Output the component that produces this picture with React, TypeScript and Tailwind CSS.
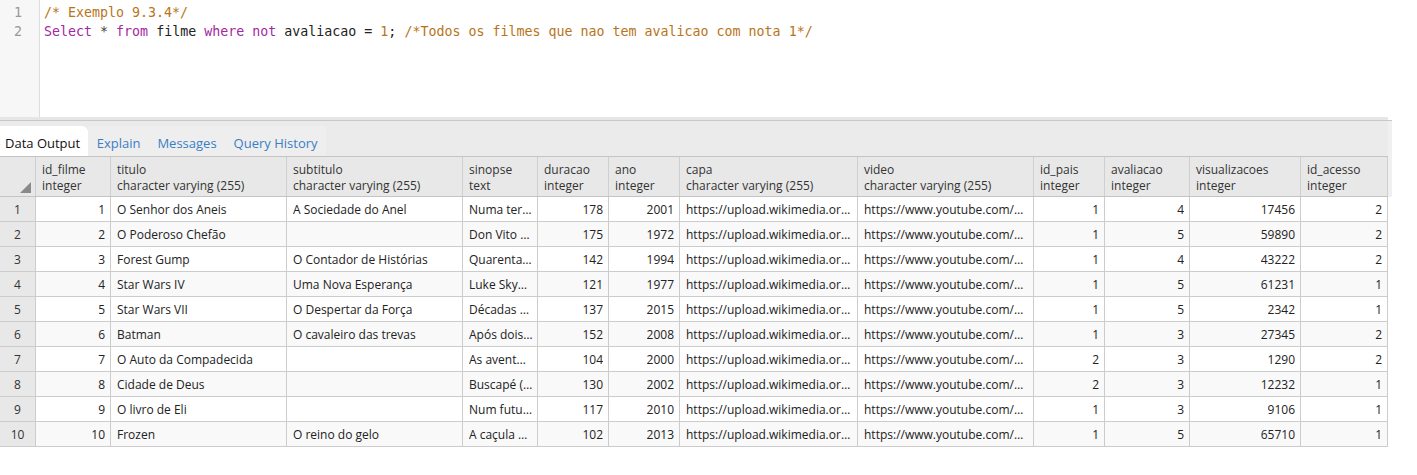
import React from 'react'

type Col = { key: string; name: string; type: string; width: number; num?: boolean }

const columns: Col[] = [
  { key: 'id_filme', name: 'id_filme', type: 'integer', width: 75, num: true },
  { key: 'titulo', name: 'titulo', type: 'character varying (255)', width: 176 },
  { key: 'subtitulo', name: 'subtitulo', type: 'character varying (255)', width: 176 },
  { key: 'sinopse', name: 'sinopse', type: 'text', width: 75 },
  { key: 'duracao', name: 'duracao', type: 'integer', width: 71, num: true },
  { key: 'ano', name: 'ano', type: 'integer', width: 71, num: true },
  { key: 'capa', name: 'capa', type: 'character varying (255)', width: 178 },
  { key: 'video', name: 'video', type: 'character varying (255)', width: 176 },
  { key: 'id_pais', name: 'id_pais', type: 'integer', width: 71, num: true },
  { key: 'avaliacao', name: 'avaliacao', type: 'integer', width: 85, num: true },
  { key: 'visualizacoes', name: 'visualizacoes', type: 'integer', width: 111, num: true },
  { key: 'id_acesso', name: 'id_acesso', type: 'integer', width: 87, num: true },
]

const capa = 'https://upload.wikimedia.org/wikipedia/pt/capa.jpg'
const video = 'https://www.youtube.com/watch?v=trailer'

const rows: Record<string, string>[] = [
  ['1', 'O Senhor dos Aneis', 'A Sociedade do Anel', 'Numa terra fantástica e única', '178', '2001', '1', '4', '17456', '2'],
  ['2', 'O Poderoso Chefão', '', 'Don Vito Corleone é o chefe', '175', '1972', '1', '5', '59890', '2'],
  ['3', 'Forest Gump', 'O Contador de Histórias', 'Quarenta anos da história', '142', '1994', '1', '4', '43222', '2'],
  ['4', 'Star Wars IV', 'Uma Nova Esperança', 'Luke Skywalker sonha', '121', '1977', '1', '5', '61231', '1'],
  ['5', 'Star Wars VII', 'O Despertar da Força', 'Décadas depois da queda', '137', '2015', '1', '5', '2342', '1'],
  ['6', 'Batman', 'O cavaleiro das trevas', 'Após dois anos desde', '152', '2008', '1', '3', '27345', '2'],
  ['7', 'O Auto da Compadecida', '', 'As aventuras de João Grilo', '104', '2000', '2', '3', '1290', '2'],
  ['8', 'Cidade de Deus', '', 'Buscapé (Alexandre Rodrigues)', '130', '2002', '2', '3', '12232', '1'],
  ['9', 'O livro de Eli', '', 'Num futuro pós-apocalíptico', '117', '2010', '1', '3', '9106', '1'],
  ['10', 'Frozen', 'O reino do gelo', 'A caçula Anna parte', '102', '2013', '1', '5', '65710', '1'],
].map((r) => ({
  id_filme: r[0],
  titulo: r[1],
  subtitulo: r[2],
  sinopse: r[3],
  duracao: r[4],
  ano: r[5],
  capa,
  video,
  id_pais: r[6],
  avaliacao: r[7],
  visualizacoes: r[8],
  id_acesso: r[9],
}))

function Editor() {
  return (
    <div className="flex h-[117px] bg-white font-['DejaVu_Sans_Mono',monospace] text-[13.3px] leading-[19px]">
      <div className="w-[40px] shrink-0 border-r border-[#dddddd] bg-[#f7f7f7] pt-[3px] pr-[17px] text-right text-[#999999]">
        <div>1</div>
        <div>2</div>
      </div>
      <div className="whitespace-pre pt-[3px] pl-[4px] text-[#222222]">
        <div className="text-[#b8741a]">/* Exemplo 9.3.4*/</div>
        <div>
          <span className="text-[#a3289f]">Select</span> <span className="text-[#444444]">*</span>{' '}
          <span className="text-[#a3289f]">from</span> filme <span className="text-[#a3289f]">where</span>{' '}
          <span className="text-[#a3289f]">not</span> avaliacao = <span className="text-[#b8741a]">1</span>;{' '}
          <span className="text-[#b8741a]">/*Todos os filmes que nao tem avalicao com nota 1*/</span>
        </div>
      </div>
    </div>
  )
}

function Tabs() {
  return (
    <div className="flex h-[36px] items-end border-t border-[#c8c8c8] bg-[#ebebeb] text-[13px]">
      <div className="flex h-[30px] items-center rounded-tr-[6px] bg-white pt-[6px] pr-[8px] pl-[5px] text-[#111111]">Data Output</div>
      {['Explain', 'Messages', 'Query History'].map((t) => (
        <div className="flex h-[30px] items-center bg-[#eeeeee] px-[8.5px] pt-[6px] text-[#3a7ec6]" key={t}>
          {t}
        </div>
      ))}
    </div>
  )
}

function Grid() {
  return (
    <div className="text-[12px] text-[#222222]">
      <div className="flex h-[41px] border-t border-b border-[#c4c4c4] bg-[#e8e8e8] text-[#333333]">
        <div className="relative w-[36px] shrink-0 border-r border-[#cfcfcf]">
          <svg className="absolute top-[25px] left-[20px]" width="11" height="11" viewBox="0 0 11 11">
            <polygon points="11,0 11,11 0,11" fill="#8a8a8a" />
          </svg>
        </div>
        {columns.map((c) => (
          <div
            className="shrink-0 overflow-hidden border-r border-[#cfcfcf] pt-[5px] pl-[6px] leading-[16px] whitespace-nowrap"
            key={c.key}
            style={{ width: c.width }}
          >
            <div>{c.name}</div>
            <div>{c.type}</div>
          </div>
        ))}
      </div>
      {rows.map((row, i) => (
        <div className={i % 2 ? 'flex h-[25px] bg-[#f9f9f9]' : 'flex h-[25px] bg-white'} key={row.id_filme}>
          <div className="flex w-[36px] shrink-0 items-center justify-center border-r border-b border-[#cccccc] bg-[#e8e8e8] pt-[1px] text-[#333333]">
            {i + 1}
          </div>
          {columns.map((c) => (
            <div
              className={
                c.num
                  ? 'flex shrink-0 items-center justify-end border-r border-b border-[#cccccc] pt-[1px] pr-[5px]'
                  : 'flex shrink-0 items-center overflow-hidden border-r border-b border-[#cccccc] pt-[1px] pr-[4px] pl-[6px]'
              }
              key={c.key}
              style={{ width: c.width }}
            >
              <span className="truncate">{row[c.key]}</span>
            </div>
          ))}
        </div>
      ))}
    </div>
  )
}

export default function App() {
  return (
    <div className="h-[475px] w-[1417px] overflow-hidden bg-white font-['Open_Sans',sans-serif]">
      <Editor />
      <div className="flex">
        <div className="w-[1388px]">
          <div className="h-[3px] bg-[#e6e6e6]" />
          <Tabs />
          <Grid />
        </div>
        <div className="mt-[3px] h-[77px] w-[4px] border-t border-[#c8c8c8] bg-[#f0f0f0]" />
      </div>
    </div>
  )
}
